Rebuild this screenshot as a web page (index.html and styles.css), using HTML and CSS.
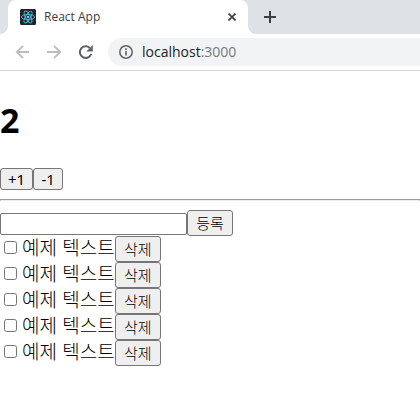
FILE: index.html
```html
<!DOCTYPE html>
<html lang="ko">
<head>
  <meta charset="UTF-8" />
  <meta name="viewport" content="width=device-width, initial-scale=1.0"/>
  <title>React App</title>
  <link rel="stylesheet" href="styles.css">
</head>
<body>

  <header class="browser">
    <div class="tab-strip">
      <div class="strip-start"></div>
      <div class="tab">
        <svg class="favicon" viewBox="0 0 16 16" width="16" height="16">
          <rect width="16" height="16" rx="1.5" fill="#20232a"/>
          <g fill="none" stroke="#53b9d3" stroke-width="0.9">
            <ellipse cx="8" cy="8" rx="6.6" ry="2.5"/>
            <ellipse cx="8" cy="8" rx="6.6" ry="2.5" transform="rotate(60 8 8)"/>
            <ellipse cx="8" cy="8" rx="6.6" ry="2.5" transform="rotate(120 8 8)"/>
          </g>
          <circle cx="8" cy="8" r="1.3" fill="#61dafb"/>
        </svg>
        <span class="tab-title">React App</span>
        <button class="icon-button" aria-label="탭 닫기">
          <svg viewBox="0 0 8 8" width="8" height="8"><path d="M0.5 0.5l7 7M7.5 0.5l-7 7" stroke="#3c4043" stroke-width="1.7"/></svg>
        </button>
      </div>
      <div class="strip-rest">
        <button class="icon-button" aria-label="새 탭">
          <svg viewBox="0 0 12 12" width="12" height="12"><path d="M6 0v12M0 6h12" stroke="#3c4043" stroke-width="2"/></svg>
        </button>
      </div>
    </div>
    <div class="toolbar">
      <button class="icon-button" aria-label="뒤로">
        <svg viewBox="0 0 16 16" width="16" height="16"><path d="M14 8H2M8 1.8L1.8 8L8 14.2" fill="none" stroke="#babcbe" stroke-width="1.8"/></svg>
      </button>
      <button class="icon-button" aria-label="앞으로">
        <svg viewBox="0 0 16 16" width="16" height="16"><path d="M1 8h13M8 1.8L14.2 8L8 14.2" fill="none" stroke="#babcbe" stroke-width="1.8"/></svg>
      </button>
      <button class="icon-button" aria-label="새로고침">
        <svg viewBox="0 0 16 16" width="16" height="16">
          <path d="M14.2 10A5.8 5.8 0 1 1 12.8 4" fill="none" stroke="#5f6368" stroke-width="2"/>
          <path d="M15.8 1v6.5H9.3z" fill="#5f6368"/>
        </svg>
      </button>
      <div class="address">
        <svg viewBox="0 0 14 14" width="14" height="14">
          <circle cx="7" cy="7" r="6.2" fill="none" stroke="#5f6368" stroke-width="1.5"/>
          <path d="M7 6v4.5M7 3.3v1.6" stroke="#5f6368" stroke-width="1.6"/>
        </svg>
        <span>localhost<span class="port">:3000</span></span>
      </div>
    </div>
  </header>

  <main>
    <h1 class="count">2</h1>
    <div class="row">
      <button class="button small">+1</button>
      <button class="button small">-1</button>
    </div>
    <hr class="divider">
    <form class="row">
      <input class="todo-input" type="text" aria-label="할 일">
      <button class="button" type="button">등록</button>
    </form>
    <div class="row">
      <input class="check" type="checkbox" id="todo1">
      <label class="text" for="todo1">예제 텍스트</label>
      <button class="button">삭제</button>
    </div>
    <div class="row">
      <input class="check" type="checkbox" id="todo2">
      <label class="text" for="todo2">예제 텍스트</label>
      <button class="button">삭제</button>
    </div>
    <div class="row">
      <input class="check" type="checkbox" id="todo3">
      <label class="text" for="todo3">예제 텍스트</label>
      <button class="button">삭제</button>
    </div>
    <div class="row">
      <input class="check" type="checkbox" id="todo4">
      <label class="text" for="todo4">예제 텍스트</label>
      <button class="button">삭제</button>
    </div>
    <div class="row">
      <input class="check" type="checkbox" id="todo5">
      <label class="text" for="todo5">예제 텍스트</label>
      <button class="button">삭제</button>
    </div>
  </main>

</body>
</html>
```
FILE: styles.css
```css
* {
  box-sizing: border-box;
}

body {
  margin: 0;
  background: #fff;
  color: #000;
  font-family: "Noto Sans CJK KR", sans-serif;
  font-size: 19px;
  line-height: 22px;
}

.browser {
  border-bottom: 1px solid #d5d6d8;
  font-family: "Open Sans", "Noto Sans CJK KR", sans-serif;
}

.tab-strip {
  display: flex;
  height: 34px;
  background: linear-gradient(#dee1e6, #dee1e6) top / 100% 20px no-repeat;
}

.strip-start {
  width: 8px;
  background: #dee1e6;
  border-bottom-right-radius: 8px;
}

.tab {
  display: flex;
  align-items: center;
  gap: 8px;
  width: 240px;
  padding: 0 12px;
  background: #fff;
  border-radius: 8px 8px 0 0;
}

.tab-title {
  flex: 1;
  color: #3c4043;
  font-size: 12px;
}

.strip-rest {
  flex: 1;
  display: flex;
  align-items: center;
  padding-left: 16px;
  background: #dee1e6;
  border-bottom-left-radius: 8px;
}

.icon-button {
  display: flex;
  padding: 0;
  border: none;
  background: none;
}

.toolbar {
  display: flex;
  align-items: center;
  gap: 15px;
  height: 36px;
  padding-left: 15px;
}

.address {
  flex: 1;
  display: flex;
  align-items: center;
  gap: 9px;
  height: 28px;
  padding-left: 11px;
  background: #f1f3f4;
  border-radius: 14px 0 0 14px;
  color: #202124;
  font-size: 14px;
}

.port {
  color: #75797d;
}

.count {
  margin: 25px 0 23px;
  font-family: "Noto Sans", sans-serif;
  font-size: 34px;
  line-height: 49px;
}

.row {
  display: flex;
  align-items: flex-start;
}

.button {
  min-width: 46px;
  height: 26px;
  padding: 0 8px;
  border: 1px solid #767676;
  border-radius: 3px;
  background: #efefef;
  color: #000;
  font-family: "Noto Sans CJK KR", sans-serif;
  font-size: 15px;
  font-weight: 300;
  line-height: 22px;
}

.small {
  min-width: 30px;
  height: 22px;
  padding: 0 7px;
  font-family: "Noto Sans", sans-serif;
  font-weight: 400;
  line-height: 20px;
}

.divider {
  margin: 9px 0;
  border: 1px solid #9a9a9a;
  border-bottom-color: #eee;
}

.todo-input {
  width: 187px;
  height: 22px;
  margin: 3px 0 0;
  border: 1px solid #767676;
  border-radius: 2px;
  font-size: 15px;
}

.text {
  font-weight: 300;
}

.check {
  width: 13px;
  height: 13px;
  margin: 5px 5px 0 4px;
}
```
